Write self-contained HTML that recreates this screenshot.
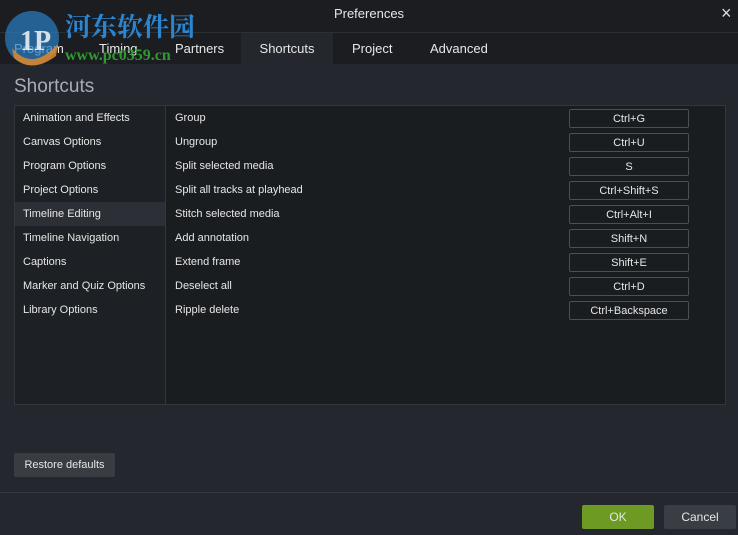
<!DOCTYPE html>
<html><head><meta charset="utf-8"><style>
*{margin:0;padding:0;box-sizing:border-box}
body{width:738px;height:535px;background:#24272d;font-family:"Liberation Sans",sans-serif;color:#e6e6e6;position:relative;overflow:hidden;font-size:11px}
.a{position:absolute}
.title{left:0;top:0;width:738px;height:32px;background:#1b1d21;}
.tabs{left:0;top:32px;width:738px;height:32px;background:#1b1d21;border-top:1px solid #2c2f34}
.tab{position:absolute;top:0;height:32px;line-height:31px;font-size:13px;color:#e8e8e8}
.panel{left:14px;top:105px;width:712px;height:300px;border:1px solid #33363b;background:#1a1d20}
.left{left:0;top:0;width:151px;height:298px;background:#1d2024;border-right:1px solid #33363b}
.li{position:absolute;left:0;width:150px;height:24px;line-height:24px;padding-left:8px}
.ri{position:absolute;left:160px;line-height:24px}
.key{position:absolute;left:554px;width:120px;height:19px;border:1px solid #4a4e55;border-radius:2px;text-align:center;line-height:19px;font-size:11px;background:#1a1d20}
</style></head><body>
<div class="a title"><div class="a" style="left:0;width:738px;top:6px;text-align:center;font-size:13px">Preferences</div>
<div class="a" style="left:721px;top:3px;font-size:18px;color:#ddd">×</div></div>
<div class="a tabs">
<div class="tab" style="left:241px;width:92px;background:#24272d;text-align:center">Shortcuts</div>
<div class="tab" style="left:14px">Program</div>
<div class="tab" style="left:99px">Timing</div>
<div class="tab" style="left:175px">Partners</div>
<div class="tab" style="left:352px">Project</div>
<div class="tab" style="left:430px">Advanced</div>
</div>
<svg class="a" style="left:4px;top:10px" width="60" height="58"><circle cx="28" cy="28" r="27" fill="#2a7fc4" opacity=".7"/><path d="M8 38 Q28 62 54 34 L52 46 Q28 64 10 48Z" fill="#e08a2a" opacity=".85"/><text x="16" y="40" font-size="28" font-weight="bold" fill="#fff" opacity=".8" font-family="Liberation Serif">1P</text></svg>
<div class="a" style="left:65px;top:13px;font-size:26px;font-weight:bold;color:#2b86d2;font-family:'Liberation Serif','Noto Serif CJK SC',serif;line-height:30px">河东软件园</div>
<div class="a" style="left:65px;top:47px;font-size:16px;font-weight:bold;color:#2f9a2f;font-family:'Liberation Serif',serif">www.pc0359.cn</div>
<div class="a" style="left:14px;top:76px;font-size:19px;color:#a9adb3">Shortcuts</div>
<div class="a panel">
<div class="a left">
<div class="li" style="top:0">Animation and Effects</div>
<div class="li" style="top:24px">Canvas Options</div>
<div class="li" style="top:48px">Program Options</div>
<div class="li" style="top:72px">Project Options</div>
<div class="li" style="top:96px;background:#2c3036">Timeline Editing</div>
<div class="li" style="top:120px">Timeline Navigation</div>
<div class="li" style="top:144px">Captions</div>
<div class="li" style="top:168px">Marker and Quiz Options</div>
<div class="li" style="top:192px">Library Options</div>
</div>
<div class="ri" style="top:0">Group</div><div class="key" style="top:3px">Ctrl+G</div>
<div class="ri" style="top:24px">Ungroup</div><div class="key" style="top:27px">Ctrl+U</div>
<div class="ri" style="top:48px">Split selected media</div><div class="key" style="top:51px">S</div>
<div class="ri" style="top:72px">Split all tracks at playhead</div><div class="key" style="top:75px">Ctrl+Shift+S</div>
<div class="ri" style="top:96px">Stitch selected media</div><div class="key" style="top:99px">Ctrl+Alt+I</div>
<div class="ri" style="top:120px">Add annotation</div><div class="key" style="top:123px">Shift+N</div>
<div class="ri" style="top:144px">Extend frame</div><div class="key" style="top:147px">Shift+E</div>
<div class="ri" style="top:168px">Deselect all</div><div class="key" style="top:171px">Ctrl+D</div>
<div class="ri" style="top:192px">Ripple delete</div><div class="key" style="top:195px">Ctrl+Backspace</div>
</div>
<div class="a" style="left:14px;top:453px;width:101px;height:24px;background:#383c43;border-radius:2px;text-align:center;line-height:24px">Restore defaults</div>
<div class="a" style="left:0;top:492px;width:738px;height:1px;background:#363a40"></div>
<div class="a" style="left:582px;top:505px;width:72px;height:24px;background:#6d9a22;border-radius:2px;text-align:center;line-height:24px;font-size:12px">OK</div>
<div class="a" style="left:664px;top:505px;width:72px;height:24px;background:#393e45;border-radius:2px;text-align:center;line-height:24px;font-size:12px">Cancel</div>
</body></html>
